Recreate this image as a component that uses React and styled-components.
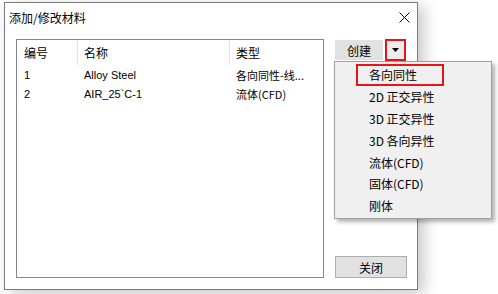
import React from 'react';
import styled, { createGlobalStyle } from 'styled-components';

const GlobalStyle = createGlobalStyle`
  body {
    margin: 0;
    background: #ffffff;
    font-family: "Microsoft YaHei", "Noto Sans CJK SC", "Liberation Sans", sans-serif;
  }
`;

const Page = styled.div`
  width: 498px;
  height: 294px;
  padding: 2px 0 0 4px;
  box-sizing: border-box;
  overflow: hidden;
`;

const Dialog = styled.div`
  width: 414px;
  height: 288px;
  box-sizing: border-box;
  background: #ffffff;
  border: 1px solid #7a7a7a;
  box-shadow: 6px 4px 14px rgba(0, 0, 0, 0.22);
  display: flex;
  flex-direction: column;
`;

const TitleBar = styled.div`
  height: 29px;
  display: flex;
  align-items: center;
  justify-content: space-between;
  padding: 0 7px 0 4px;
  font-size: 12px;
  color: #000;
`;

const CloseX = styled.svg`
  width: 11px;
  height: 11px;
`;

const Body = styled.div`
  flex: 1;
  display: flex;
  gap: 11px;
  padding: 7px 10px 11px 11px;
`;

const ListBox = styled.div`
  width: 308px;
  height: 239px;
  box-sizing: border-box;
  border: 1px solid #828790;
  padding: 0 0 0 1px;
`;

const Row = styled.div`
  display: grid;
  grid-template-columns: 60px 152px 1fr;
  height: ${(p) => (p.$header ? '25px' : '19px')};
  align-items: center;
  font-size: ${(p) => (p.$header ? '12px' : '11px')};
  color: #000;
`;

const Cell = styled.div`
  padding-left: ${(p) => (p.$header ? '6px' : '6px')};
  height: 100%;
  display: flex;
  align-items: center;
  white-space: nowrap;
  overflow: hidden;
  border-right: ${(p) => (p.$sep ? '1px solid #e5e5e5' : 'none')};
  font-family: ${(p) =>
    p.$latin ? '"Liberation Sans", Arial, sans-serif' : '"Noto Sans CJK SC", "Liberation Sans", sans-serif'};
`;

const Side = styled.div`
  position: relative;
  width: 72px;
  display: flex;
  flex-direction: column;
  justify-content: space-between;
`;

const SplitRow = styled.div`
  display: flex;
  align-items: center;
  gap: 2px;
`;

const Button = styled.div`
  height: ${(p) => p.$h || 20}px;
  width: ${(p) => p.$w}px;
  box-sizing: border-box;
  background: #e1e1e1;
  border: 1px solid ${(p) => (p.$bordered ? '#adadad' : '#e1e1e1')};
  display: flex;
  align-items: center;
  justify-content: center;
  font-size: 12px;
  color: #000;
  font-family: "Noto Sans CJK SC", sans-serif;
`;

const Arrow = styled.div`
  width: 21px;
  height: 22px;
  box-sizing: border-box;
  border: 2px solid #e8141c;
  background: #ececec;
  display: flex;
  align-items: center;
  justify-content: center;
`;

const Menu = styled.div`
  position: absolute;
  left: -1px;
  top: 22px;
  width: 158px;
  height: 158px;
  box-sizing: border-box;
  background: #f0f0f0;
  border: 1px solid #a0a0a0;
  box-shadow: 3px 3px 4px rgba(0, 0, 0, 0.3);
  padding: 2px 0 0 21px;
  z-index: 2;
`;

const MenuItem = styled.div`
  height: 21.8px;
  width: 88px;
  box-sizing: border-box;
  display: flex;
  align-items: center;
  padding-left: ${(p) => (p.$active ? '11px' : '13px')};
  margin-left: ${(p) => (p.$active ? '0' : '0')};
  border: ${(p) => (p.$active ? '2px solid #e8141c' : 'none')};
  font-size: 12px;
  color: #000;
  font-family: "Noto Sans CJK SC", "Liberation Sans", sans-serif;
  white-space: nowrap;
`;

const rows = [
  ['1', 'Alloy Steel', '各向同性-线...'],
  ['2', 'AIR_25`C-1', '流体(CFD)'],
];

const menuItems = ['各向同性', '2D 正交异性', '3D 正交异性', '3D 各向异性', '流体(CFD)', '固体(CFD)', '刚体'];

export default function App() {
  return (
    <Page>
      <GlobalStyle />
      <Dialog>
        <TitleBar>
          <span>添加/修改材料</span>
          <CloseX viewBox="0 0 11 11">
            <path d="M0.5 0.5 L10.5 10.5 M10.5 0.5 L0.5 10.5" stroke="#000" strokeWidth="1" />
          </CloseX>
        </TitleBar>
        <Body>
          <ListBox>
            <Row $header>
              <Cell $header $sep>编号</Cell>
              <Cell $header $sep>名称</Cell>
              <Cell $header>类型</Cell>
            </Row>
            {rows.map((r) => (
              <Row key={r[0]}>
                <Cell $latin>{r[0]}</Cell>
                <Cell $latin>{r[1]}</Cell>
                <Cell>{r[2]}</Cell>
              </Row>
            ))}
          </ListBox>
          <Side>
            <SplitRow>
              <Button $w={48}>创建</Button>
              <Arrow>
                <svg width="7" height="4" viewBox="0 0 7 4">
                  <path d="M0 0 L7 0 L3.5 4 Z" fill="#000" />
                </svg>
              </Arrow>
            </SplitRow>
            <Menu>
              {menuItems.map((m, i) => (
                <MenuItem key={m} $active={i === 0}>
                  {m}
                </MenuItem>
              ))}
            </Menu>
            <Button $w={72} $h={22} $bordered>
              关闭
            </Button>
          </Side>
        </Body>
      </Dialog>
    </Page>
  );
}
